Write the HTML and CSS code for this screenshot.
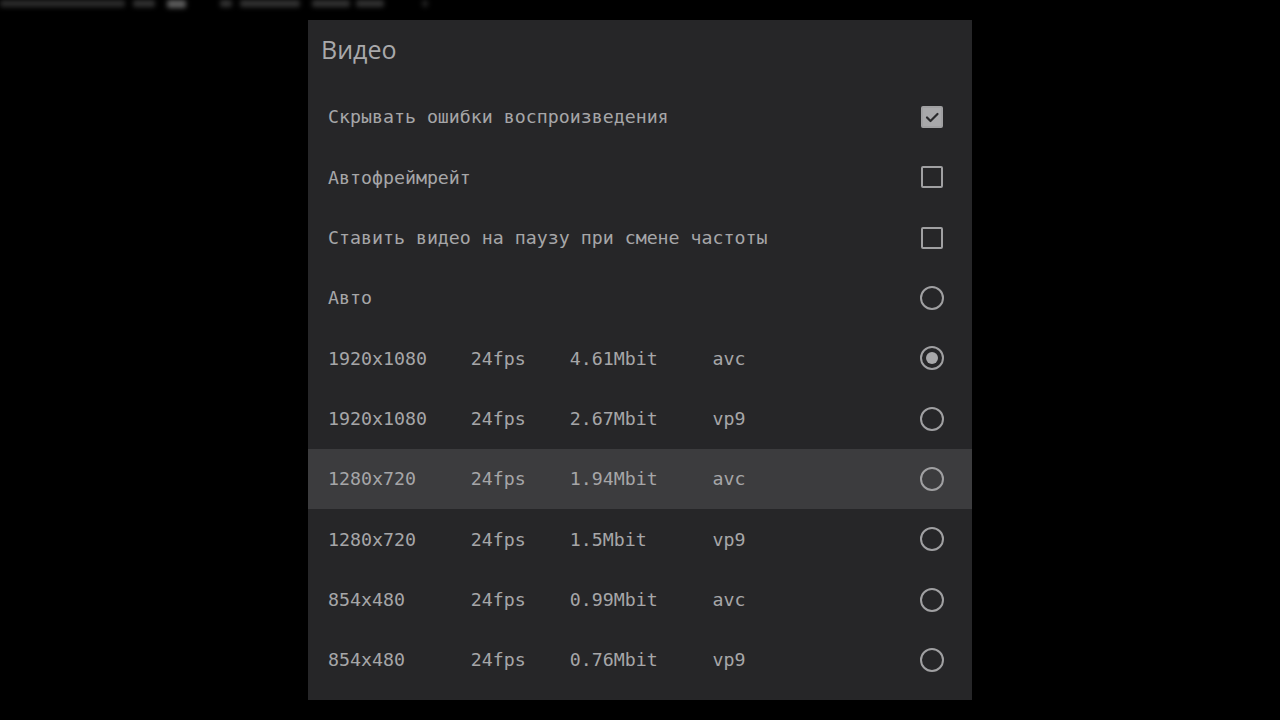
FILE: index.html
```html
<!DOCTYPE html>
<html lang="ru">
<head>
<meta charset="utf-8">
<title>Видео</title>
<link rel="stylesheet" href="styles.css">
</head>
<body>
<div class="backdrop">
  <span class="blob b1"></span><span class="blob b2"></span><span class="blob b3"></span>
  <span class="blob b4"></span><span class="blob b5"></span><span class="blob b6"></span><span class="blob b7"></span><span class="blob b8"></span>
</div>
<div class="dialog">
  <div class="title">Видео</div>
  <div class="row"><span class="label">Скрывать ошибки воспроизведения</span><span class="check checked"><svg viewBox="0 0 22 22" width="22" height="22"><path d="M6 11.5 L9.5 15 L16.5 8" fill="none" stroke="#2a2a2c" stroke-width="2.2" stroke-linecap="round" stroke-linejoin="round"/></svg></span></div>
  <div class="row"><span class="label">Автофреймрейт</span><span class="check"></span></div>
  <div class="row"><span class="label">Ставить видео на паузу при смене частоты</span><span class="check"></span></div>
  <div class="row"><span class="label">Авто</span><span class="radio"></span></div>
  <div class="row"><span class="label">1920x1080    24fps    4.61Mbit     avc</span><span class="radio on"></span></div>
  <div class="row"><span class="label">1920x1080    24fps    2.67Mbit     vp9</span><span class="radio"></span></div>
  <div class="row focused"><span class="label">1280x720     24fps    1.94Mbit     avc</span><span class="radio"></span></div>
  <div class="row"><span class="label">1280x720     24fps    1.5Mbit      vp9</span><span class="radio"></span></div>
  <div class="row"><span class="label">854x480      24fps    0.99Mbit     avc</span><span class="radio"></span></div>
  <div class="row"><span class="label">854x480      24fps    0.76Mbit     vp9</span><span class="radio"></span></div>
</div>
</body>
</html>
```
FILE: styles.css
```css
html, body {
  margin: 0;
  padding: 0;
  background: #000;
  width: 1280px;
  height: 720px;
  overflow: hidden;
}
.backdrop {
  height: 8px;
  display: flex;
  align-items: flex-start;
  filter: blur(2.5px);
}
.blob {
  display: block;
  height: 7px;
  background: #333;
  border-radius: 2px;
}
.b1 { width: 125px; margin-left: 0; background: #2c2c2c; }
.b2 { width: 22px; margin-left: 8px; }
.b3 { width: 19px; margin-left: 12px; background: #5e5e5e; height: 8px; }
.b4 { width: 12px; margin-left: 34px; }
.b5 { width: 60px; margin-left: 8px; }
.b6 { width: 38px; margin-left: 12px; }
.b7 { width: 28px; margin-left: 6px; }
.b8 { width: 6px; margin-left: 38px; background: #222; }
.dialog {
  width: 664px;
  height: 680px;
  margin: 12px 0 0 308px;
  background: #262628;
  box-sizing: border-box;
  padding-bottom: 10px;
  display: flex;
  flex-direction: column;
}
.title {
  height: 67px;
  box-sizing: border-box;
  padding: 13px 0 0 13px;
  font-family: "Open Sans", "Noto Sans", sans-serif;
  font-size: 25px;
  color: #a9a9ab;
  line-height: 32px;
}
.row {
  height: 60.33px;
  flex: 0 0 60.33px;
  display: flex;
  align-items: center;
  justify-content: space-between;
  padding: 0 28px 0 20px;
}
.row.focused {
  background: #3c3c3e;
}
.label {
  font-family: "DejaVu Sans Mono", "Liberation Mono", monospace;
  font-size: 18.25px;
  color: #a6a6a8;
  white-space: pre;
}
.check {
  width: 18px;
  height: 18px;
  border: 2px solid #a0a0a2;
  border-radius: 2px;
  box-sizing: content-box;
  margin-right: 1px;
  display: flex;
  align-items: center;
  justify-content: center;
}
.check.checked {
  background: #a8a8aa;
}
.check svg {
  display: block;
  flex: none;
}
.radio {
  width: 20px;
  height: 20px;
  border: 2px solid #a0a0a2;
  border-radius: 50%;
  display: flex;
  align-items: center;
  justify-content: center;
}
.radio.on::after {
  content: "";
  width: 12px;
  height: 12px;
  border-radius: 50%;
  background: #a8a8aa;
}
```
